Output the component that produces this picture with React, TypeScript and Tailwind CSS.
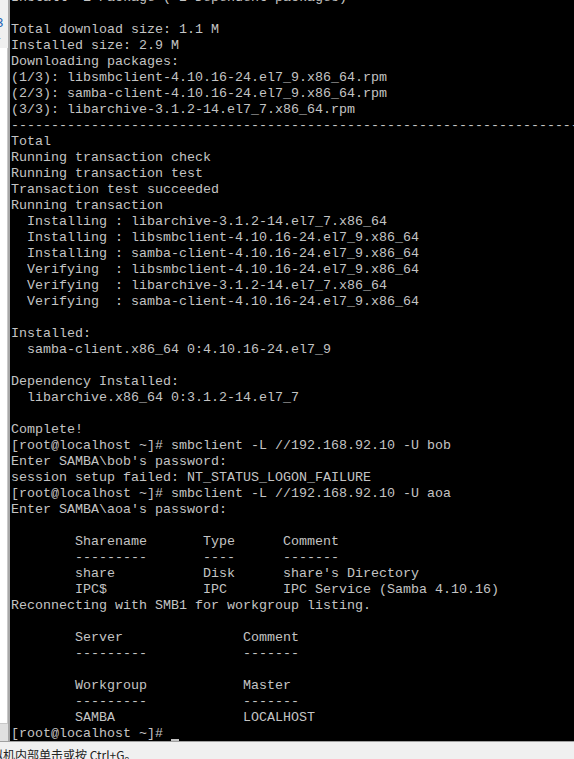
const lines: string[] = [
  "Install  1 Package (+2 Dependent packages)",
  "",
  "Total download size: 1.1 M",
  "Installed size: 2.9 M",
  "Downloading packages:",
  "(1/3): libsmbclient-4.10.16-24.el7_9.x86_64.rpm",
  "(2/3): samba-client-4.10.16-24.el7_9.x86_64.rpm",
  "(3/3): libarchive-3.1.2-14.el7_7.x86_64.rpm",
  "-".repeat(80),
  "Total",
  "Running transaction check",
  "Running transaction test",
  "Transaction test succeeded",
  "Running transaction",
  "  Installing : libarchive-3.1.2-14.el7_7.x86_64",
  "  Installing : libsmbclient-4.10.16-24.el7_9.x86_64",
  "  Installing : samba-client-4.10.16-24.el7_9.x86_64",
  "  Verifying  : libsmbclient-4.10.16-24.el7_9.x86_64",
  "  Verifying  : libarchive-3.1.2-14.el7_7.x86_64",
  "  Verifying  : samba-client-4.10.16-24.el7_9.x86_64",
  "",
  "Installed:",
  "  samba-client.x86_64 0:4.10.16-24.el7_9",
  "",
  "Dependency Installed:",
  "  libarchive.x86_64 0:3.1.2-14.el7_7",
  "",
  "Complete!",
  "[root@localhost ~]# smbclient -L //192.168.92.10 -U bob",
  "Enter SAMBA\\bob's password:",
  "session setup failed: NT_STATUS_LOGON_FAILURE",
  "[root@localhost ~]# smbclient -L //192.168.92.10 -U aoa",
  "Enter SAMBA\\aoa's password:",
  "",
  "        Sharename       Type      Comment",
  "        ---------       ----      -------",
  "        share           Disk      share's Directory",
  "        IPC$            IPC       IPC Service (Samba 4.10.16)",
  "Reconnecting with SMB1 for workgroup listing.",
  "",
  "        Server               Comment",
  "        ---------            -------",
  "",
  "        Workgroup            Master",
  "        ---------            -------",
  "        SAMBA                LOCALHOST",
];

export default function App() {
  return (
    <div className="w-[574px] h-[759px] overflow-hidden bg-[#f0f0f0] flex flex-col">
      <div className="flex h-[742px] border-b border-[#a0a0a0]">
        {/* side strip from the host window */}
        <div className="w-[10px] flex flex-col border-r-2 border-[#a8a8a8] overflow-hidden">
          <div className="h-[48px] bg-[#f0f0f0] text-[13px] leading-[18px] pt-[14px] -ml-[4px] font-['Liberation_Sans',sans-serif]">
            <div className="text-[#1a5fb4]">3</div>
            <div className="text-[#444]">r</div>
          </div>
          <div className="flex-1 bg-white border-r border-[#c8c8c8]" />
          <div className="h-[18px] bg-[#e0e0e0] border-t border-[#c8c8c8]" />
        </div>
        <div className="flex-1 bg-black overflow-hidden pl-px font-['Liberation_Mono',monospace] text-[13.333px] leading-4 text-[#c4c4c4] whitespace-pre">
          <div className="-mt-[10px]">
            {lines.map((l, i) => (
              <div key={i} className="h-4">
                {l}
              </div>
            ))}
            <div className="h-4">
              [root@localhost ~]# <span className="inline-block w-2 h-4 align-top relative"><span className="absolute left-0 right-0 bottom-[1px] h-[2px] bg-[#c4c4c4]" /></span>
            </div>
          </div>
        </div>
      </div>
      <div className="flex-1 overflow-hidden whitespace-nowrap text-[12px] leading-[16px] pt-[5px] text-[#222] -ml-[9px] font-['Noto_Sans_CJK_SC','Liberation_Sans',sans-serif]">
        拟机内部单击或按 Ctrl+G。
      </div>
    </div>
  );
}
